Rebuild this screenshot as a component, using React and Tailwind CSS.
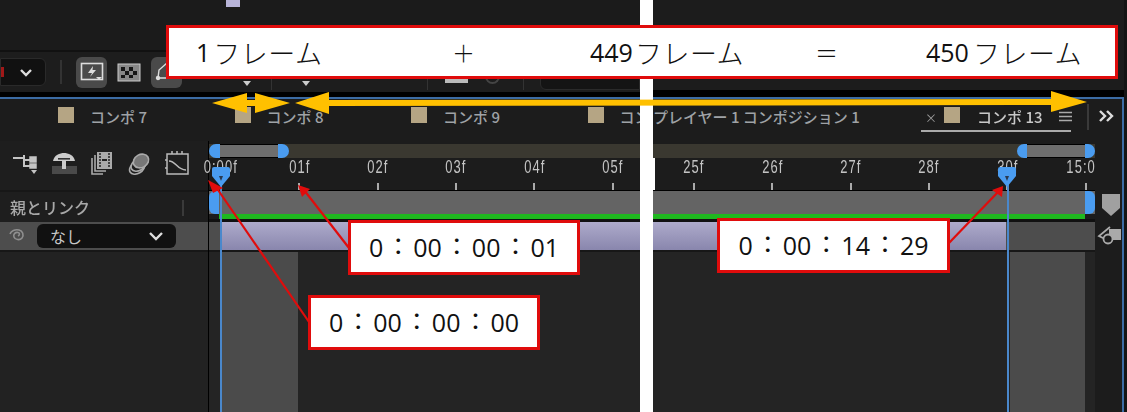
const jp = '"Noto Sans CJK JP", "Open Sans", sans-serif';
const ui = { fontFamily: '"Noto Sans CJK JP", "Liberation Sans", sans-serif' };

function Tab({ label }) {
  return (
    <div className="flex items-start w-[176.5px] shrink-0">
      <span className="w-4 h-4 bg-[#b5a584] mt-2 shrink-0" />
      <span className="ml-4 text-[15px] leading-5 mt-[8px] text-[#9fa2a6] font-medium whitespace-nowrap">{label}</span>
    </div>
  );
}

function Tick({ label }) {
  return (
    <div className="w-[78.3px] shrink-0 flex flex-col items-center">
      <span className="text-[18px] leading-[16px] mt-[1px] text-[#c4c4c4] scale-x-[.72] tracking-[1.5px] whitespace-nowrap" style={{ fontFamily: '"Liberation Sans", sans-serif' }}>{label}</span>
      <span className="w-[2px] h-[7px] bg-[#aaa] mt-[8px]" />
    </div>
  );
}

function Num({ children }) {
  return <span className="text-[25px] leading-none" style={{ fontFamily: '"Open Sans", sans-serif' }}>{children}</span>;
}

function Kata({ children }) {
  return <span className="text-[27px] leading-none font-light tracking-[0.5px]" style={{ fontFamily: jp }}>{children}</span>;
}

function Colon() {
  return <span className="text-[24px] leading-none w-[30px] text-center -mt-[6px]" style={{ fontFamily: jp }}>：</span>;
}

function Callout({ parts, className }) {
  return (
    <div className={"absolute bg-white border-[3px] border-[#e00c0c] flex items-center justify-center text-[#111] whitespace-nowrap z-30 " + className}>
      <Num>{parts[0]}</Num><Colon /><Num>{parts[1]}</Num><Colon /><Num>{parts[2]}</Num><Colon /><Num>{parts[3]}</Num>
    </div>
  );
}

function Playhead({ x }) {
  return (
    <svg className="absolute top-[166px] z-10" style={{ left: x - 10 }} width="20" height="22" viewBox="0 0 20 22">
      <path d="M3 1H17Q19 1 19 3V10L10 21L1 10V3Q1 1 3 1Z" fill="#4a9cf0" />
      <path d="M8 10H12L10 15Z" fill="#2a3a50" />
    </svg>
  );
}

function LeftPanel() {
  return (
    <div className="w-[640px] shrink-0 relative overflow-hidden flex flex-col blur-[0.4px]" style={ui}>
      <div className="h-[50px] bg-[#1b1b1b] relative">
        <span className="absolute left-[226px] top-0 w-[14px] h-[7px] bg-[#b8b4d8]" />
      </div>
      <div className="h-[42px] bg-[#1d1d1d] border-t-2 border-[#111] flex items-center relative">
        <div className="w-[46px] h-[28px] rounded-r-md bg-[#111] border border-[#2a2a2a] flex items-center justify-between pr-3">
          <span className="w-[3px] h-[10px] bg-[#a01818]" />
          <svg width="14" height="9" viewBox="0 0 14 9"><path d="M2 2L7 7L12 2" stroke="#ddd" strokeWidth="2.4" fill="none" /></svg>
        </div>
        <span className="w-[2px] h-6 bg-[#333] ml-[14px]" />
        <div className="w-[31px] h-[31px] rounded-md bg-[#4a4a4a] ml-[14px] flex items-center justify-center">
          <svg width="24" height="20" viewBox="0 0 24 20" fill="none"><rect x="1.500" y="1.500" width="21" height="16" stroke="#ddd" strokeWidth="1.600" /><path d="M13 4L8 11H12L10 15L16 8H12.500Z" fill="#ddd" /><path d="M16 15H22L19 18Z" fill="#ddd" /></svg>
        </div>
        <svg className="ml-[10px]" width="24" height="19" viewBox="0 0 24 19"><rect x="1" y="1" width="22" height="17" fill="#888" stroke="#ccc" /><path d="M4 4h4v4H4zM12 4h4v4h-4zM8 8h4v4H8zM16 8h4v4h-4zM4 12h4v3H4zM12 12h4v3h-4z" fill="#161616" /></svg>
        <div className="w-[31px] h-[31px] rounded-md bg-[#4a4a4a] ml-[10px] flex items-center justify-center">
          <svg width="24" height="22" viewBox="0 0 24 22" fill="none" stroke="#ddd" strokeWidth="1.400"><path d="M3 17L4 9L12 2L20 11L22 17Z" /><circle cx="3" cy="17" r="1.500" fill="#ddd" /></svg>
        </div>
        <svg className="absolute left-[243px] top-[29px]" width="8" height="5"><path d="M0 0H8L4 5Z" fill="#ccc" /></svg>
        <svg className="absolute left-[302px] top-[29px]" width="8" height="5"><path d="M0 0H8L4 5Z" fill="#ccc" /></svg>
        <span className="absolute left-[271px] top-[27px] w-[1px] h-[11px] bg-[#333]" />
        <span className="absolute left-[427px] top-[27px] w-[1px] h-[11px] bg-[#333]" />
        <span className="absolute left-[523px] top-[27px] w-[1px] h-[11px] bg-[#333]" />
        <span className="absolute left-[445px] top-[26px] w-[23px] h-[5px] bg-[#bbb]" />
        <span className="absolute left-[485px] top-[24px] w-[15px] h-[8px] rounded-b-full border-2 border-t-0 border-[#444]" />
        <div className="absolute left-[540px] top-[26px] w-[100px] h-[12px] bg-[#141414] border border-[#2a2a2a] rounded-bl-md" />
      </div>
      <div className="h-[5px] bg-black" />
      <div className="h-[2px] bg-[#3c6ca4]" />
      <div className="h-[42px] bg-[#1c1c1c] flex pl-[58px] overflow-hidden">
        <Tab label="コンポ 7" />
        <Tab label="コンポ 8" />
        <Tab label="コンポ 9" />
        <Tab label="コン" />
      </div>
      <div className="flex flex-1">
        <div className="w-[208px] shrink-0 flex flex-col bg-[#1e1e1e]">
          <div className="h-[49px] flex items-center gap-[13px] pl-[12px] pb-[5px]">
            <svg width="26" height="24" viewBox="0 0 26 24" fill="none" stroke="#c4c4c4" strokeWidth="1.500"><path d="M1 7H12M12 4V15H18M12 9H19" strokeWidth="2" /><rect x="18" y="6" width="6" height="5" fill="#c4c4c4" /><rect x="18" y="13" width="6" height="4" fill="#c4c4c4" /><path d="M19 19H25L22 23Z" fill="#c4c4c4" stroke="none" /></svg>
            <svg width="26" height="24" viewBox="0 0 26 24"><path d="M2 10C3 4 9 2 13 2S23 4 24 10Z" fill="#ccc" /><rect x="11" y="6" width="4" height="10" fill="#ccc" /><rect x="1" y="15" width="25" height="8" fill="#4a4a4a" /><rect x="11" y="15" width="4" height="3" fill="#ccc" /><rect x="7" y="7" width="12" height="1.600" fill="#333" /></svg>
            <svg width="24" height="24" viewBox="0 0 24 24" fill="none"><rect x="7" y="1" width="15" height="17" fill="#aaa" /><path d="M9 3h2M9 6h2M9 9h2M9 12h2M9 15h2M18 3h2M18 6h2M18 9h2M18 12h2M18 15h2" stroke="#222" strokeWidth="1.400" /><rect x="12" y="8" width="5" height="2" fill="#222" /><path d="M5 4V20H16M2 7V23H13" stroke="#aaa" strokeWidth="1.600" /></svg>
            <svg width="24" height="24" viewBox="0 0 24 24" fill="none" stroke="#aaa" strokeWidth="1.600"><ellipse cx="10" cy="17" rx="8" ry="5.500" transform="rotate(-30 10 17)" /><ellipse cx="11.500" cy="14" rx="8" ry="5.500" transform="rotate(-30 11.500 14)" fill="#1e1e1e" /><ellipse cx="14" cy="10" rx="8" ry="6.500" transform="rotate(-30 14 10)" fill="#777" /></svg>
            <svg width="26" height="26" viewBox="0 0 26 26" fill="none" stroke="#bbb" strokeWidth="1.500"><rect x="3" y="4" width="21" height="20" /><path d="M5 11C12 11 13 20 22 20" /><path d="M8 1V4M13 1V4M18 1V4M1 10H3M1 18H3" /></svg>
          </div>
          <div className="h-[32px] border-t-2 border-[#171717] flex items-center pl-[10px] text-[16px] text-[#a8a8a8] font-medium relative">
            親とリンク
            <span className="absolute left-[182px] top-[8px] w-[2px] h-[16px] bg-[#3a3a3a]" />
          </div>
          <div className="h-[28px] bg-[#4d4d4d] flex items-center pl-[8px]">
            <svg width="20" height="20" viewBox="0 0 20 20" fill="none" stroke="#8f8f8f" strokeWidth="1.600"><path d="M10 10c2-1 2-3 0-3.500-3-.5-5 2-4 4.500 1 3 6 3.500 8 1 2-3 1-7-3-8-4-1-8 1-9 4" /></svg>
            <div className="ml-[9px] w-[139px] h-[24px] rounded-md bg-[#111] flex items-center justify-between pl-[13px] pr-[12px] text-[16px] text-[#c8c8c8]">
              なし
              <svg width="16" height="10" viewBox="0 0 16 10"><path d="M2 2L8 8L14 2" stroke="#ddd" strokeWidth="2.400" fill="none" /></svg>
            </div>
          </div>
          <div className="flex-1 bg-[#222] border-t-2 border-[#171717]" />
        </div>
        <div className="w-[1px] bg-black shrink-0" />
        <div className="flex-1 flex flex-col bg-[#1c1c1c] min-w-0">
          <div className="h-[3px]" />
          <div className="h-[14px] flex bg-[#3a3830]">
            <div className="w-[11px] bg-[#4a9cf0] rounded-l-full" />
            <div className="w-[58px] bg-[#6e6e6e] border-y border-black" />
            <div className="w-[11px] bg-[#4a9cf0] rounded-r-full" />
          </div>
          <div className="h-[32px] flex ml-[-27px] overflow-hidden">
            <Tick label="0:00f" />
            <Tick label="01f" />
            <Tick label="02f" />
            <Tick label="03f" />
            <Tick label="04f" />
            <Tick label="05f" />
          </div>
          <div className="h-[24px] bg-[#646464] border-t border-black flex">
            <div className="w-[10px] h-full bg-[#4a9cf0] rounded-l-md" />
          </div>
          <div className="h-[5px] bg-[#1fb81f] ml-[10px]" />
          <div className="h-[3px] bg-[#111]" />
          <div className="h-[28px] bg-[#4d4d4d] pl-[12px]">
            <div className="h-full bg-linear-to-b from-[#aeabcb] to-[#8986ad]" />
          </div>
          <div className="flex-1 bg-[#242424] border-t-2 border-[#171717] pl-[12px]">
            <div className="w-[77px] h-full bg-[#4b4b4b]" />
          </div>
        </div>
      </div>
      <span className="absolute left-[220px] top-[175px] bottom-0 w-[2px] bg-[#4a88cc]" />
      <Playhead x={221} />
    </div>
  );
}

function RightPanel() {
  return (
    <div className="flex-1 relative overflow-hidden flex flex-col blur-[0.4px]" style={ui}>
      <div className="h-[90px] bg-[#1c1c1c]" />
      <div className="h-[7px] bg-black" />
      <div className="h-[2px] bg-[#3c6ca4]" />
      <div className="h-[42px] bg-[#1c1c1c] flex items-start pr-[4px] relative">
        <span className="mt-[8px] text-[15px] leading-5 text-[#9fa2a6] font-medium whitespace-nowrap">プレイヤー 1 コンポジション 1</span>
        <span className="absolute left-[268px] w-[150px] top-[31px] h-[2px] bg-[#aaa]" />
        <span className="absolute left-[272px] top-[11px] text-[12px] leading-4 text-[#999]">×</span>
        <span className="absolute left-[291px] top-[8px] w-4 h-4 bg-[#b5a584]" />
        <span className="absolute left-[324px] top-[8px] text-[15px] leading-5 text-[#c8c8c8] font-medium whitespace-nowrap">コンポ 13</span>
        <svg className="absolute left-[406px] top-[12px]" width="13" height="11"><path d="M0 1.500H13M0 5.500H13M0 9.500H13" stroke="#aaa" strokeWidth="1.500" /></svg>
        <span className="absolute left-[434px] top-[5px] w-[2px] h-[26px] bg-[#3a3a3a]" />
        <svg className="absolute left-[445px] top-[11px]" width="16" height="12" fill="none" stroke="#ddd" strokeWidth="2.400"><path d="M2 1L7 6L2 11M9 1L14 6L9 11" /></svg>
      </div>
      <div className="flex flex-1">
        <div className="w-[442px] shrink-0 flex flex-col">
          <div className="h-[3px] bg-[#1c1c1c]" />
          <div className="h-[14px] flex bg-[#3a3830] justify-end">
            <div className="w-[10px] bg-[#4a9cf0] rounded-l-full" />
            <div className="w-[58px] bg-[#6e6e6e] border-y border-black" />
            <div className="w-[10px] bg-[#4a9cf0] rounded-r-full" />
          </div>
          <div className="h-[32px] flex bg-[#1c1c1c] ml-[2px] overflow-hidden">
            <Tick label="25f" />
            <Tick label="26f" />
            <Tick label="27f" />
            <Tick label="28f" />
            <Tick label="30f" />
            <Tick label="15:00" />
          </div>
          <div className="h-[24px] bg-[#646464] border-t border-black flex justify-end">
            <div className="w-[10px] h-full bg-[#4a9cf0] rounded-r-md" />
          </div>
          <div className="h-[5px] bg-[#1c1c1c]">
            <div className="h-full w-[432px] bg-[#1fb81f]" />
          </div>
          <div className="h-[3px] bg-[#111]" />
          <div className="h-[28px] bg-[#4d4d4d]">
            <div className="h-full w-[353px] bg-linear-to-b from-[#aeabcb] to-[#8986ad]" />
          </div>
          <div className="flex-1 bg-[#242424] border-t-2 border-[#171717] pl-[357px] pr-[10px]">
            <div className="h-full bg-[#4b4b4b]" />
          </div>
        </div>
        <div className="flex-1 bg-[#1c1c1c] flex flex-col items-center">
          <svg className="mt-[52px]" width="20" height="24" viewBox="0 0 20 24"><path d="M1 1H19V15L10 23L1 15Z" fill="#a0a0a0" /></svg>
          <svg className="mt-[9px] -ml-[5px]" width="24" height="20" viewBox="0 0 24 20" fill="none"><path d="M12 3H24V14H12Z" fill="#aaa" /><path d="M13 1L2 10L8 13" stroke="#aaa" strokeWidth="1.800" /><circle cx="11" cy="13" r="4.500" stroke="#aaa" strokeWidth="1.800" fill="#1c1c1c" /></svg>
        </div>
      </div>
      <span className="absolute left-[354px] top-[175px] bottom-0 w-[2px] bg-[#4a88cc]" />
      <span className="absolute left-[469px] top-[97px] bottom-0 w-[2px] bg-[#3c6ca4]" />
      <span className="absolute left-[471px] top-0 bottom-0 right-0 bg-[#141414]" />
      <Playhead x={354} />
    </div>
  );
}

export default function App() {
  return (
    <div className="relative w-[1127px] h-[412px] overflow-hidden flex bg-white">
      <LeftPanel />
      <div className="w-[13px] shrink-0 bg-white" />
      <RightPanel />

      <svg className="absolute inset-0 z-20" width="1127" height="412" viewBox="0 0 1127 412">
        <g fill="#ffc000">
          <path d="M212 103L247 93V100H255V93L290 103L255 113V106H247V113Z" />
          <path d="M295 103L329 92V100L1051 99V91L1087 102L1051 112V105L329 106V114Z" />
        </g>
        <g stroke="#e00c0c" strokeWidth="2.200" fill="#e00c0c">
          <path d="M309 322L216 187" fill="none" />
          <path d="M349 248L304 190" fill="none" />
          <path d="M949 243L998 192" fill="none" />
          <path d="M208 180L223 188L213 193Z" stroke="none" />
          <path d="M298 185L310 189L302 197Z" stroke="none" />
          <path d="M1003 186L992 190L1002 197Z" stroke="none" />
        </g>
      </svg>

      <div className="absolute left-[166px] top-[25px] w-[952px] h-[54px] bg-white border-[3px] border-[#e00c0c] z-30 flex items-center text-[#111] whitespace-nowrap pl-[27px]">
        <span className="w-[256px] flex items-center gap-[3px]"><Num>1</Num><Kata>フレーム</Kata></span>
        <span className="w-[138px] text-[23px] font-light" style={{ fontFamily: jp }}>＋</span>
        <span className="w-[225px] flex items-center gap-[2px]"><Num>449</Num><Kata>フレーム</Kata></span>
        <span className="w-[111px] text-[23px] font-light" style={{ fontFamily: jp }}>＝</span>
        <span className="flex items-center gap-[4px]"><Num>450</Num><Kata>フレーム</Kata></span>
      </div>
      <Callout parts={["0", "00", "00", "01"]} className="left-[348px] top-[220px] w-[232px] h-[55px]" />
      <Callout parts={["0", "00", "00", "00"]} className="left-[308px] top-[295px] w-[232px] h-[55px]" />
      <Callout parts={["0", "00", "14", "29"]} className="left-[717px] top-[218px] w-[233px] h-[55px]" />
    </div>
  );
}
